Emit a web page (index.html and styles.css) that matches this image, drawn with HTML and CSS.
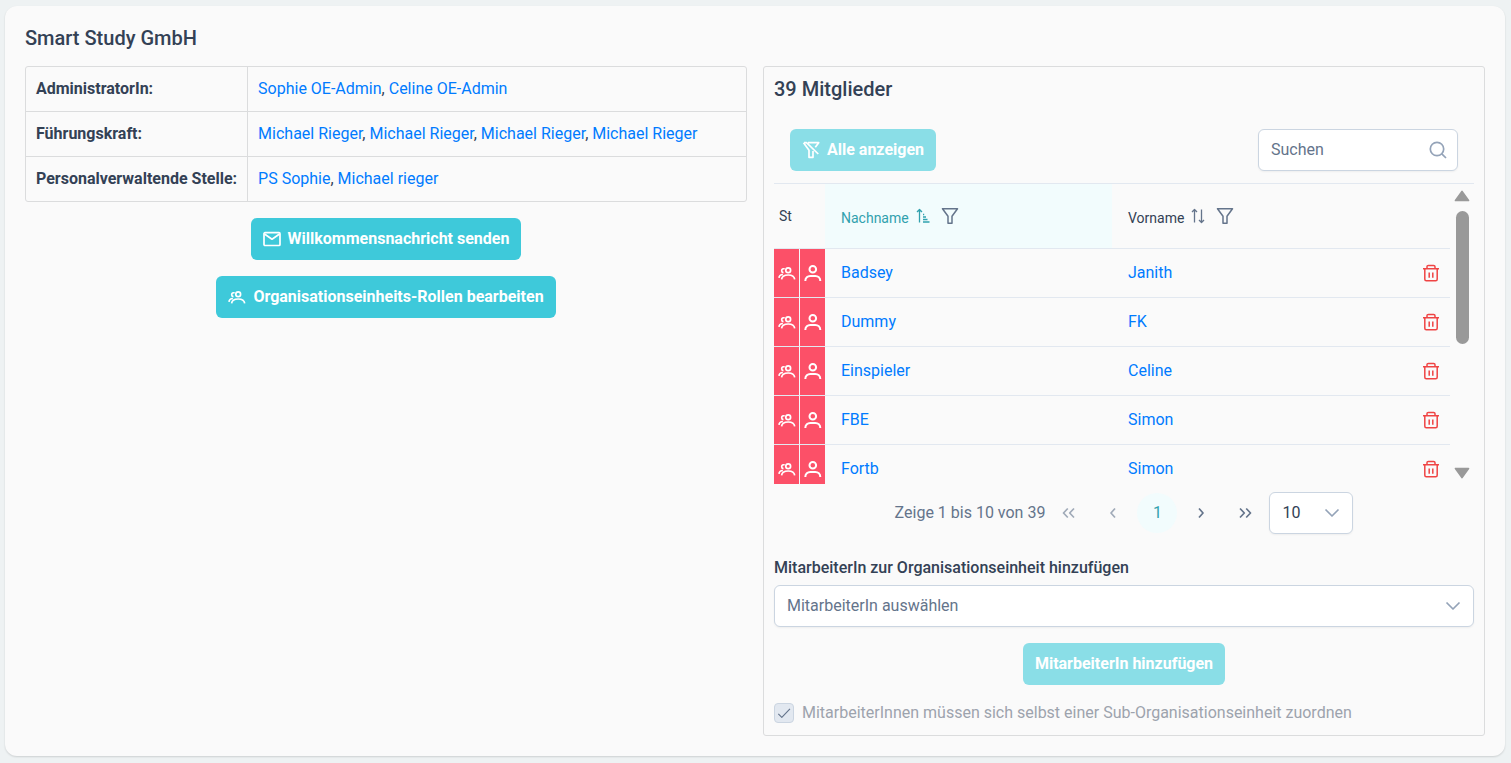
FILE: index.html
```html
<!DOCTYPE html>
<html lang="de">
<head>
<meta charset="utf-8">
<meta name="viewport" content="width=device-width, initial-scale=1">
<title>Smart Study GmbH</title>
<link rel="stylesheet" href="styles.css">
</head>
<body>
<svg class="sprite" aria-hidden="true">
  <symbol id="users" viewBox="0 0 18 18"><circle cx="10.2" cy="6.300" r="2.400"/><path d="M3.600 15.400C3.900 12.300 6.300 11 10.200 11S16.300 12.300 16.700 15.400M6.600 4.900C5 4.400 3.700 5.300 3.700 6.700c0 1 .7 1.800 1.800 2M1 13.900c.1-1.900 1.400-3.300 3.900-3.400"/></symbol>
  <symbol id="user" viewBox="0 0 18 18"><circle cx="8.800" cy="5.200" r="3.300"/><path d="M1.300 17c0-3.200 2.300-5 5-5h5c2.700 0 5 1.800 5 5"/></symbol>
  <symbol id="trash" viewBox="0 0 18 18"><path d="M1 4.800h16M5 4.800V2.800c0-.9.500-1.400 1.400-1.400h5.200c.9 0 1.400.5 1.400 1.400v2M2.800 4.800v10.400c0 1 .5 1.500 1.500 1.500h9.400c1 0 1.500-.5 1.500-1.500V4.800M7.200 8.500v5.200M10.800 8.500v5.200"/></symbol>
  <symbol id="filter" viewBox="0 0 18 18"><path d="M1.500 1.700h15l-5.500 7.500v7.100H7V9.200z"/></symbol>
  <symbol id="filter-slash" viewBox="0 0 18 18"><path d="M6 1.700h10.700l-3.400 4.500M1.500 1.700 7 9.200v7.100h4v-6.300M2 1.700h2.500l11.800 11.300"/></symbol>
  <symbol id="search" viewBox="0 0 18 18"><circle cx="8" cy="8" r="6.700"/><path d="m12.800 12.800 4.200 4.200"/></symbol>
  <symbol id="envelope" viewBox="0 0 18 18"><rect x="1" y="2.700" width="16" height="12.800" rx="1"/><path d="m1.500 4 7.500 5.200L16.500 4"/></symbol>
  <symbol id="sort" viewBox="0 0 16 16"><path d="M4.500 14.500v-13M2 4l2.500-2.500L7 4M11.500 1.500v13M9 12l2.500 2.500L14 12"/></symbol>
  <symbol id="sort-up" viewBox="0 0 16 16"><path d="M4.500 14.500v-13M2 4l2.500-2.500L7 4M8 6.500h1.200M8 9h3M8 11.500h4.500M8 14h6.500"/></symbol>
  <symbol id="down" viewBox="0 0 16 16"><path d="m1.500 4.500 6.500 6.500 6.500-6.500"/></symbol>
  <symbol id="left" viewBox="0 0 16 16"><path d="m10 3.500-4 4.500 4 4.500"/></symbol>
  <symbol id="right" viewBox="0 0 16 16"><path d="m6 3.500 4 4.500-4 4.500"/></symbol>
  <symbol id="first" viewBox="0 0 16 16"><path d="M6.800 3.500 2.500 8l4.300 4.500M13 3.500 8.700 8l4.300 4.500"/></symbol>
  <symbol id="last" viewBox="0 0 16 16"><path d="M3 3.500 7.300 8 3 12.500M9.200 3.500 13.500 8l-4.300 4.500"/></symbol>
  <symbol id="check" viewBox="0 0 16 16"><path d="m1.500 9 4 4L14.800 3.200"/></symbol>
</svg>

<main class="card">
  <h1 class="heading">Smart Study GmbH</h1>
  <div class="columns">
    <section>
      <table class="roles">
        <tr><th scope="row">AdministratorIn:</th><td><a href="#">Sophie OE-Admin</a>, <a href="#">Celine OE-Admin</a></td></tr>
        <tr><th scope="row">Führungskraft:</th><td><a href="#">Michael Rieger</a>, <a href="#">Michael Rieger</a>, <a href="#">Michael Rieger</a>, <a href="#">Michael Rieger</a></td></tr>
        <tr><th scope="row">Personalverwaltende Stelle:</th><td><a href="#">PS Sophie</a>, <a href="#">Michael rieger</a></td></tr>
      </table>
      <div class="actions">
        <button class="button" type="button"><svg class="icon"><use href="#envelope"/></svg>Willkommensnachricht senden</button>
        <button class="button" type="button"><svg class="icon"><use href="#users"/></svg>Organisationseinheits-Rollen bearbeiten</button>
      </div>
    </section>

    <section class="panel">
      <h2 class="heading">39 Mitglieder</h2>
      <div class="toolbar">
        <button class="button" type="button" disabled><svg class="icon"><use href="#filter-slash"/></svg>Alle anzeigen</button>
        <div class="field search">
          <input class="control" type="text" placeholder="Suchen" aria-label="Suchen">
          <svg class="icon field-icon"><use href="#search"/></svg>
        </div>
      </div>

      <div class="scroll-area">
        <table class="members">
          <colgroup><col class="col-group"><col class="col-person"><col><col><col class="col-delete"></colgroup>
          <thead>
            <tr>
              <th class="status-head" scope="col" colspan="2">St</th>
              <th class="sorted" scope="col"><span class="column-title">Nachname<svg class="icon-small"><use href="#sort-up"/></svg><button class="icon-button filter" type="button" aria-label="Nachname filtern"><svg class="icon"><use href="#filter"/></svg></button></span></th>
              <th scope="col"><span class="column-title">Vorname<svg class="icon-small"><use href="#sort"/></svg><button class="icon-button filter" type="button" aria-label="Vorname filtern"><svg class="icon"><use href="#filter"/></svg></button></span></th>
              <th></th>
            </tr>
          </thead>
          <tbody>
            <tr><td class="status"><svg class="icon"><use href="#users"/></svg></td><td class="status"><svg class="icon"><use href="#user"/></svg></td><td><a href="#">Badsey</a></td><td><a href="#">Janith</a></td><td class="delete"><button class="icon-button" type="button" aria-label="Badsey entfernen"><svg class="icon"><use href="#trash"/></svg></button></td></tr>
            <tr><td class="status"><svg class="icon"><use href="#users"/></svg></td><td class="status"><svg class="icon"><use href="#user"/></svg></td><td><a href="#">Dummy</a></td><td><a href="#">FK</a></td><td class="delete"><button class="icon-button" type="button" aria-label="Dummy entfernen"><svg class="icon"><use href="#trash"/></svg></button></td></tr>
            <tr><td class="status"><svg class="icon"><use href="#users"/></svg></td><td class="status"><svg class="icon"><use href="#user"/></svg></td><td><a href="#">Einspieler</a></td><td><a href="#">Celine</a></td><td class="delete"><button class="icon-button" type="button" aria-label="Einspieler entfernen"><svg class="icon"><use href="#trash"/></svg></button></td></tr>
            <tr><td class="status"><svg class="icon"><use href="#users"/></svg></td><td class="status"><svg class="icon"><use href="#user"/></svg></td><td><a href="#">FBE</a></td><td><a href="#">Simon</a></td><td class="delete"><button class="icon-button" type="button" aria-label="FBE entfernen"><svg class="icon"><use href="#trash"/></svg></button></td></tr>
            <tr><td class="status"><svg class="icon"><use href="#users"/></svg></td><td class="status"><svg class="icon"><use href="#user"/></svg></td><td><a href="#">Fortb</a></td><td><a href="#">Simon</a></td><td class="delete"><button class="icon-button" type="button" aria-label="Fortb entfernen"><svg class="icon"><use href="#trash"/></svg></button></td></tr>
          </tbody>
        </table>
        <div class="scrollbar" aria-hidden="true">
          <svg class="arrow" viewBox="0 0 16 12"><path d="M8 1.500 14.500 10.500h-13z"/></svg>
          <div class="track"><div class="thumb"></div></div>
          <svg class="arrow" viewBox="0 0 16 12"><path d="M8 10.500 1.500 1.500h13z"/></svg>
        </div>
      </div>

      <nav class="paginator" aria-label="Seiten">
        <span class="page-info">Zeige 1 bis 10 von 39</span>
        <button class="page" type="button" disabled aria-label="Erste Seite"><svg class="icon-small"><use href="#first"/></svg></button>
        <button class="page" type="button" disabled aria-label="Vorherige Seite"><svg class="icon-small"><use href="#left"/></svg></button>
        <button class="page current" type="button" aria-current="page">1</button>
        <button class="page" type="button" aria-label="Nächste Seite"><svg class="icon-small"><use href="#right"/></svg></button>
        <button class="page" type="button" aria-label="Letzte Seite"><svg class="icon-small"><use href="#last"/></svg></button>
        <div class="field page-size">
          <select class="control" aria-label="Zeilen pro Seite"><option>10</option></select>
          <svg class="icon-small field-icon"><use href="#down"/></svg>
        </div>
      </nav>

      <form class="add-form">
        <label class="add-label" for="employee">MitarbeiterIn zur Organisationseinheit hinzufügen</label>
        <div class="field">
          <select class="control empty" id="employee"><option>MitarbeiterIn auswählen</option></select>
          <svg class="icon-small field-icon"><use href="#down"/></svg>
        </div>
        <button class="button add-button" type="submit" disabled>MitarbeiterIn hinzufügen</button>
        <label class="check">
          <span class="check-box"><input type="checkbox" checked disabled><svg class="check-mark"><use href="#check"/></svg></span>
          MitarbeiterInnen müssen sich selbst einer Sub-Organisationseinheit zuordnen
        </label>
      </form>
    </section>
  </div>
</main>
</body>
</html>
```

FILE: styles.css
```css
* {
  box-sizing: border-box;
}

body {
  margin: 0;
  padding: 6px 6px 6px 5px;
  background: #eef2f3;
  color: #334155;
  font: 16px/24px Roboto, "Liberation Sans", sans-serif;
}

button,
input,
select {
  font: inherit;
}

a {
  color: #007bff;
  text-decoration: none;
}

svg {
  fill: none;
  stroke: currentColor;
  stroke-width: 1.7;
  stroke-linejoin: round;
}

.sprite {
  display: none;
}

.icon {
  display: block;
  flex: none;
  width: 18px;
  height: 18px;
}

.icon-small {
  display: block;
  flex: none;
  width: 16px;
  height: 16px;
}

.card {
  padding: 20px;
  border-radius: 12px;
  background: #fafafa;
  box-shadow: 0 1px 2px rgba(0, 0, 0, 0.14);
}

.heading {
  margin: 0 0 16px;
  font-size: 20px;
  font-weight: 500;
  line-height: 24px;
}

.columns {
  display: grid;
  grid-template-columns: 1fr 1fr;
  gap: 16px;
}

/* Roles */

.roles {
  width: 100%;
  border: 1px solid #dbdcdd;
  border-radius: 3px;
  border-spacing: 0;
}

.roles th,
.roles td {
  height: 45px;
  padding: 10px;
  border-bottom: 1px solid #dbdcdd;
  text-align: left;
}

.roles th {
  width: 1%;
  border-right: 1px solid #dbdcdd;
  white-space: nowrap;
  font-weight: 700;
}

.roles tr:last-child > * {
  height: 44px;
  border-bottom: 0;
}

.actions {
  display: flex;
  flex-direction: column;
  align-items: center;
  gap: 16px;
  margin-top: 16px;
}

.button {
  display: flex;
  align-items: center;
  gap: 7px;
  padding: 9px 12px;
  border: 0;
  border-radius: 6px;
  background: #3ec9da;
  color: #fff;
  font-weight: 700;
}

.button:disabled {
  background: #8adee7;
}

/* Members */

.panel {
  padding: 10px;
  border: 1px solid #dbdcdd;
  border-radius: 3px;
}

.toolbar {
  display: flex;
  justify-content: space-between;
  align-items: center;
  padding: 12px 16px;
  border-bottom: 1px solid #e2e8f0;
}

.field {
  position: relative;
}

.control {
  display: block;
  width: 100%;
  height: 42px;
  padding: 8px 12px;
  border: 1px solid #cbd5e1;
  border-radius: 6px;
  background: #fff;
  box-shadow: 0 1px 2px rgba(18, 18, 23, 0.05);
  color: #334155;
  appearance: none;
}

.control::placeholder,
.control.empty {
  color: #64748b;
  opacity: 1;
}

.field-icon {
  position: absolute;
  top: 13px;
  right: 13px;
  color: #94a3b8;
  pointer-events: none;
}

.search {
  width: 200px;
}

.search .control {
  padding: 7px 12px 9px;
}

.search .field-icon {
  top: 12px;
  right: 11px;
}

.scroll-area {
  display: flex;
  height: 300px;
  overflow: hidden;
}

.members {
  flex: 1;
  align-self: flex-start;
  width: 100%;
  table-layout: fixed;
  border-spacing: 0;
}

.col-group {
  width: 26px;
}

.col-person {
  width: 25px;
}

.col-delete {
  width: 51px;
}

.members th,
.members td {
  height: 49px;
  padding: 0 0 0 16px;
  border-bottom: 1px solid #e2e8f0;
  text-align: left;
}

.members th {
  height: 65px;
  font-size: 14px;
  font-weight: 400;
}

.members .status-head {
  padding-left: 5px;
}

.members .sorted {
  background: #f2fcfd;
  color: #31a1ae;
}

.column-title {
  display: flex;
  align-items: center;
  gap: 6px;
  padding-top: 3px;
}

.column-title .icon-small,
.column-title .icon-button {
  margin-bottom: 4px;
}

.column-title .icon-small {
  stroke-width: 1.3;
}

th:not(.sorted) .column-title .icon-small,
.filter {
  color: #64748b;
}

.filter {
  margin-left: 4px;
}

.icon-button {
  padding: 0;
  border: 0;
  background: none;
  color: #64748b;
}

.members .status {
  padding: 0 3px;
  background: #fc5068;
  color: #fff;
}

.members .status:first-child {
  border-right: 1px solid #f7f7fa;
}

.status .icon {
  margin: 0 auto;
}

.status + .status .icon {
  stroke-width: 2;
}

.members .delete {
  padding: 0 10px 0 0;
}

.delete .icon-button {
  display: block;
  margin-left: auto;
  color: #ef4444;
}

.delete .icon,
.filter .icon {
  stroke-width: 1.5;
}

.scrollbar {
  display: flex;
  flex: none;
  flex-direction: column;
  align-items: center;
  width: 24px;
  padding: 6px 0 5px;
}

.arrow {
  width: 16px;
  height: 12px;
  fill: #999;
  stroke: #999;
}

.track {
  flex: 1;
  width: 13px;
  margin: 9px 0;
}

.thumb {
  height: 133px;
  border-radius: 7px;
  background: #999;
}

.paginator {
  display: flex;
  justify-content: center;
  align-items: center;
  gap: 4px;
  padding: 8px 0;
  color: #64748b;
}

.page {
  display: grid;
  place-items: center;
  width: 40px;
  height: 40px;
  padding: 0;
  border: 0;
  border-radius: 50%;
  background: none;
  color: #64748b;
}

.page:disabled {
  color: #a0aab8;
}

.page.current {
  background: #f2fcfd;
  color: #31a1ae;
}

.page-size {
  width: 84px;
}

/* Add employee */

.add-form {
  display: flex;
  flex-direction: column;
  gap: 16px;
  margin-top: 14px;
}

.add-label {
  margin-bottom: -11px;
  font-weight: 500;
}

.add-button {
  align-self: center;
}

.check {
  display: flex;
  align-items: center;
  gap: 8px;
  color: #9da3ad;
}

.check-box {
  position: relative;
  width: 20px;
  height: 20px;
}

.check-box input {
  display: block;
  width: 20px;
  height: 20px;
  margin: 0;
  border: 1px solid #cbd5e1;
  border-radius: 4px;
  background: #e2e8f0;
  appearance: none;
}

.check-mark {
  position: absolute;
  top: 3px;
  left: 3px;
  width: 14px;
  height: 14px;
  color: #64748b;
  stroke-width: 1.3;
}
```
